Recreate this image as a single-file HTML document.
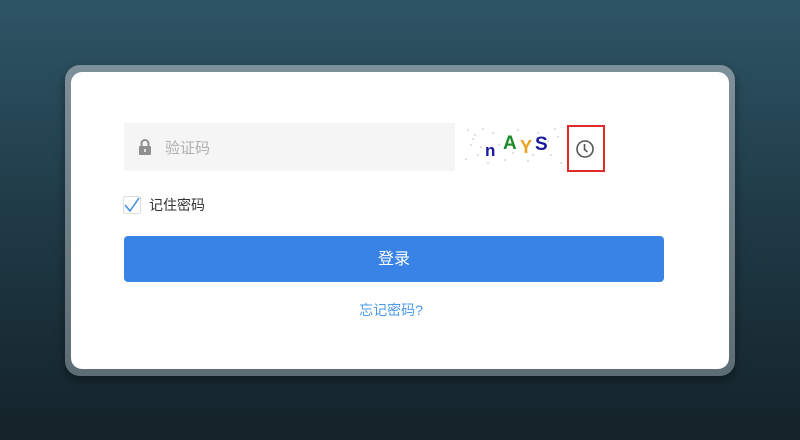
<!DOCTYPE html>
<html><head><meta charset="utf-8"><style>
*{margin:0;padding:0;box-sizing:border-box}
body{width:800px;height:440px;overflow:hidden;background:linear-gradient(#2e5566 0%,#1f3a46 50%,#142229 100%);font-family:"Liberation Sans","Noto Sans CJK SC",sans-serif;position:relative}
.outer{position:absolute;left:65px;top:65px;width:670px;height:311px;border-radius:15px;background:linear-gradient(#7d909b,#5d6d74);box-shadow:0 4px 10px rgba(0,0,0,.35)}
.card{position:absolute;left:71px;top:72px;width:658px;height:297px;border-radius:11px;background:#fff}
.input{position:absolute;left:124px;top:123px;width:331px;height:48px;background:#f5f5f5;border-radius:2px}
.input span{position:absolute;left:41px;top:14px;font-size:15px;color:#b0b0b0}
.cap{position:absolute;left:463px;top:125px;width:100px;height:42px}
.red{position:absolute;left:567px;top:125px;width:38px;height:47px;border:2px solid #e02a2a}
.cb{position:absolute;left:123px;top:196px;width:18px;height:18px;border:1px solid #ddd;border-radius:2px;background:#fff}
.rem{position:absolute;left:149px;top:195px;font-size:14px;color:#333}
.btn{position:absolute;left:124px;top:236px;width:540px;height:46px;border-radius:4px;background:#3a83e6;color:#fff;font-size:16px;text-align:center;line-height:47px}
.fg{position:absolute;left:0;width:782px;top:300px;text-align:center;font-size:14px;color:#4a9ae8}
</style></head><body>
<div class="outer"></div><div class="card"></div>
<div class="input">
<svg style="position:absolute;left:14px;top:15px" width="14" height="18" viewBox="0 0 14 18"><path d="M3.5 8V5.5a3.5 3.5 0 0 1 7 0V8" fill="none" stroke="#8f8f8f" stroke-width="2"/><rect x="1" y="8" width="12" height="9" rx="1" fill="#8f8f8f"/><rect x="6.2" y="11" width="1.6" height="3" fill="#f5f5f5"/></svg>
<span>验证码</span></div>
<svg class="cap" viewBox="0 0 100 42">
<g fill="#bbb"><circle cx="5" cy="5" r=".8"/><circle cx="12" cy="10" r=".8"/><circle cx="20" cy="4" r=".8"/><circle cx="8" cy="20" r=".8"/><circle cx="15" cy="30" r=".8"/><circle cx="30" cy="8" r=".8"/><circle cx="42" cy="35" r=".8"/><circle cx="55" cy="5" r=".8"/><circle cx="65" cy="36" r=".8"/><circle cx="75" cy="8" r=".8"/><circle cx="88" cy="30" r=".8"/><circle cx="95" cy="12" r=".8"/><circle cx="3" cy="34" r=".8"/><circle cx="25" cy="38" r=".8"/><circle cx="50" cy="28" r=".8"/><circle cx="80" cy="24" r=".8"/><circle cx="92" cy="4" r=".8"/><circle cx="36" cy="20" r=".8"/><circle cx="60" cy="18" r=".8"/><circle cx="98" cy="38" r=".8"/><circle cx="10" cy="14" r=".8"/><circle cx="18" cy="22" r=".8"/><circle cx="85" cy="16" r=".8"/><circle cx="70" cy="30" r=".8"/></g>
<text x="22" y="31" font-family="Liberation Sans" font-weight="bold" font-size="17" fill="#1a1aa0">n</text>
<text x="40" y="24" font-family="Liberation Sans" font-weight="bold" font-size="19" fill="#1c8a2a">A</text>
<text x="57" y="28" font-family="Liberation Sans" font-weight="bold" font-size="18" fill="#f0a020">Y</text>
<text x="72" y="25" font-family="Liberation Sans" font-weight="bold" font-size="19" fill="#1a1a9a">S</text>
</svg>
<div class="red"><svg style="position:absolute;left:6px;top:12px" width="20" height="20" viewBox="0 0 20 20"><circle cx="10" cy="10" r="8" fill="none" stroke="#555" stroke-width="1.6"/><path d="M9.5 5v5.5l3 2.5" fill="none" stroke="#555" stroke-width="1.6"/></svg></div>
<div class="cb"><svg width="18" height="18" viewBox="0 0 18 18" style="position:absolute;left:-1px;top:-1px"><path d="M2 9l5 6 9-13" fill="none" stroke="#3a8ee6" stroke-width="1.5"/></svg></div>
<div class="rem">记住密码</div>
<div class="btn">登录</div>
<div class="fg">忘记密码?</div>
</body></html>
